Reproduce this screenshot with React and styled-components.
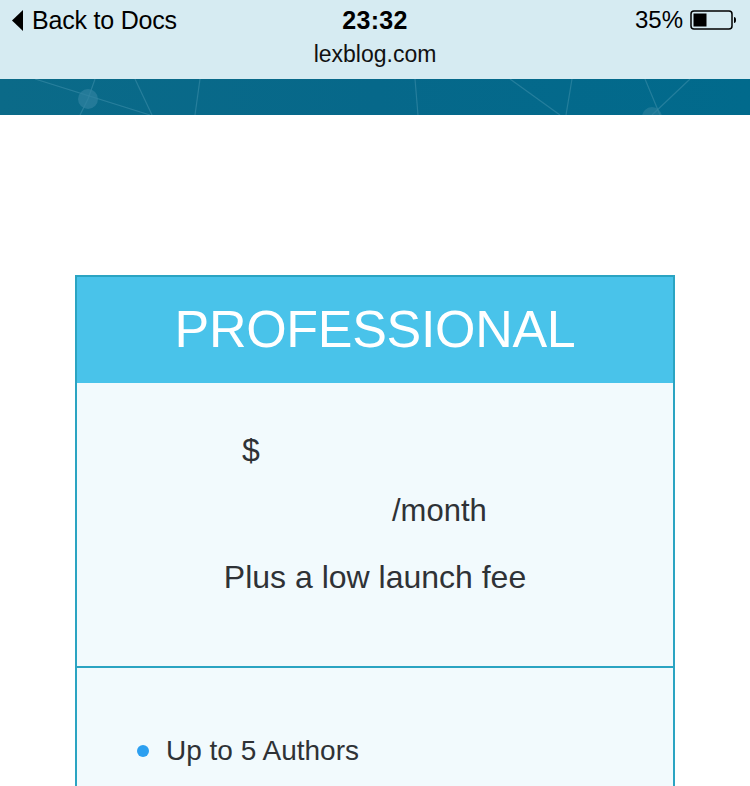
import React from "react";
import styled, { createGlobalStyle } from "styled-components";

const Global = createGlobalStyle`
  html, body { margin: 0; padding: 0; background: #ffffff; }
  body { font-family: "Liberation Sans", Arial, sans-serif; }
  * { box-sizing: border-box; }
`;

const Page = styled.div`
  width: 750px;
  min-height: 786px;
  background: #ffffff;
  overflow: hidden;
`;

const StatusBar = styled.header`
  height: 79px;
  background: #d6ebf2;
  display: flex;
  flex-direction: column;
  color: #000;
`;

const StatusRow = styled.div`
  height: 40px;
  padding: 0 12px 0 12px;
  display: grid;
  grid-template-columns: 1fr auto 1fr;
  align-items: center;
`;

const BackLink = styled.div`
  display: flex;
  align-items: center;
  gap: 9px;
  font-size: 25px;
  letter-spacing: -0.2px;
`;

const Time = styled.div`
  font-size: 25px;
  font-weight: 700;
  letter-spacing: 0.3px;
`;

const Battery = styled.div`
  justify-self: end;
  display: flex;
  align-items: center;
  gap: 7px;
  font-size: 24px;
  padding-right: 2px;
`;

const Url = styled.div`
  text-align: center;
  font-size: 23px;
  line-height: 28px;
  color: #111;
`;

const Banner = styled.div`
  height: 36px;
  background: linear-gradient(90deg, #0b6a88 0%, #06688a 50%, #016a8c 100%);
  svg { display: block; }
`;

const Card = styled.section`
  width: 600px;
  margin: 160px auto 0;
  border: 2px solid #2ba4c2;
  border-bottom: none;
  background: #f2fafd;
`;

const CardHeader = styled.h2`
  margin: 0;
  height: 106px;
  background: #49c3ea;
  color: #ffffff;
  font-weight: 400;
  font-size: 52px;
  letter-spacing: -0.3px;
  display: flex;
  align-items: center;
  justify-content: center;
  padding-bottom: 2px;
`;

const PriceSection = styled.div`
  padding: 47px 0 69px;
  border-bottom: 2px solid #2ba4c2;
  color: #2f3236;
`;

const Dollar = styled.div`
  font-size: 32px;
  line-height: 40px;
  padding-left: 165px;
`;

const Period = styled.div`
  font-size: 31px;
  line-height: 40px;
  margin-top: 21px;
  padding-left: 315px;
`;

const Fee = styled.div`
  font-size: 32px;
  line-height: 40px;
  margin-top: 26px;
  text-align: center;
`;

const FeatureList = styled.ul`
  list-style: none;
  margin: 0;
  padding: 65px 0 40px 60px;
`;

const Feature = styled.li`
  display: flex;
  align-items: center;
  gap: 17px;
  font-size: 28px;
  line-height: 36px;
  color: #2f3236;
  &::before {
    content: "";
    width: 12px;
    height: 12px;
    border-radius: 50%;
    background: #2c9ff0;
    flex: none;
  }
`;

function BatteryIcon() {
  return (
    <svg width="46" height="20" viewBox="0 0 46 20">
      <rect x="1" y="1" width="41" height="18" rx="3" fill="none" stroke="#000" strokeWidth="1.5" />
      <rect x="3.5" y="3.5" width="13" height="13" fill="#000" />
      <path d="M44 7 Q46 7 46 10 Q46 13 44 13 Z" fill="#000" />
    </svg>
  );
}

function BannerArt() {
  return (
    <svg width="750" height="36" viewBox="0 0 750 36">
      <g stroke="#3f90ab" strokeOpacity="0.55" strokeWidth="1.2" fill="none">
        <line x1="35" y1="0" x2="150" y2="36" />
        <line x1="88" y1="20" x2="95" y2="0" />
        <line x1="88" y1="20" x2="80" y2="36" />
        <line x1="135" y1="0" x2="152" y2="36" />
        <line x1="200" y1="0" x2="195" y2="36" />
        <line x1="415" y1="0" x2="418" y2="36" />
        <line x1="510" y1="0" x2="560" y2="36" />
        <line x1="572" y1="0" x2="566" y2="36" />
        <line x1="645" y1="0" x2="660" y2="36" />
        <line x1="690" y1="0" x2="652" y2="36" />
      </g>
      <circle cx="88" cy="20" r="10" fill="#2f829f" fillOpacity="0.7" />
      <circle cx="652" cy="38" r="10" fill="#2f829f" fillOpacity="0.6" />
    </svg>
  );
}

export default function App() {
  return (
    <Page>
      <Global />
      <StatusBar>
        <StatusRow>
          <BackLink>
            <svg width="11" height="21" viewBox="0 0 11 21">
              <path d="M11 0 L0 10.5 L11 21 Z" fill="#000" />
            </svg>
            <span>Back to Docs</span>
          </BackLink>
          <Time>23:32</Time>
          <Battery>
            <span>35%</span>
            <BatteryIcon />
          </Battery>
        </StatusRow>
        <Url>lexblog.com</Url>
      </StatusBar>
      <Banner>
        <BannerArt />
      </Banner>
      <Card>
        <CardHeader>PROFESSIONAL</CardHeader>
        <PriceSection>
          <Dollar>$</Dollar>
          <Period>/month</Period>
          <Fee>Plus a low launch fee</Fee>
        </PriceSection>
        <FeatureList>
          <Feature>Up to 5 Authors</Feature>
        </FeatureList>
      </Card>
    </Page>
  );
}
